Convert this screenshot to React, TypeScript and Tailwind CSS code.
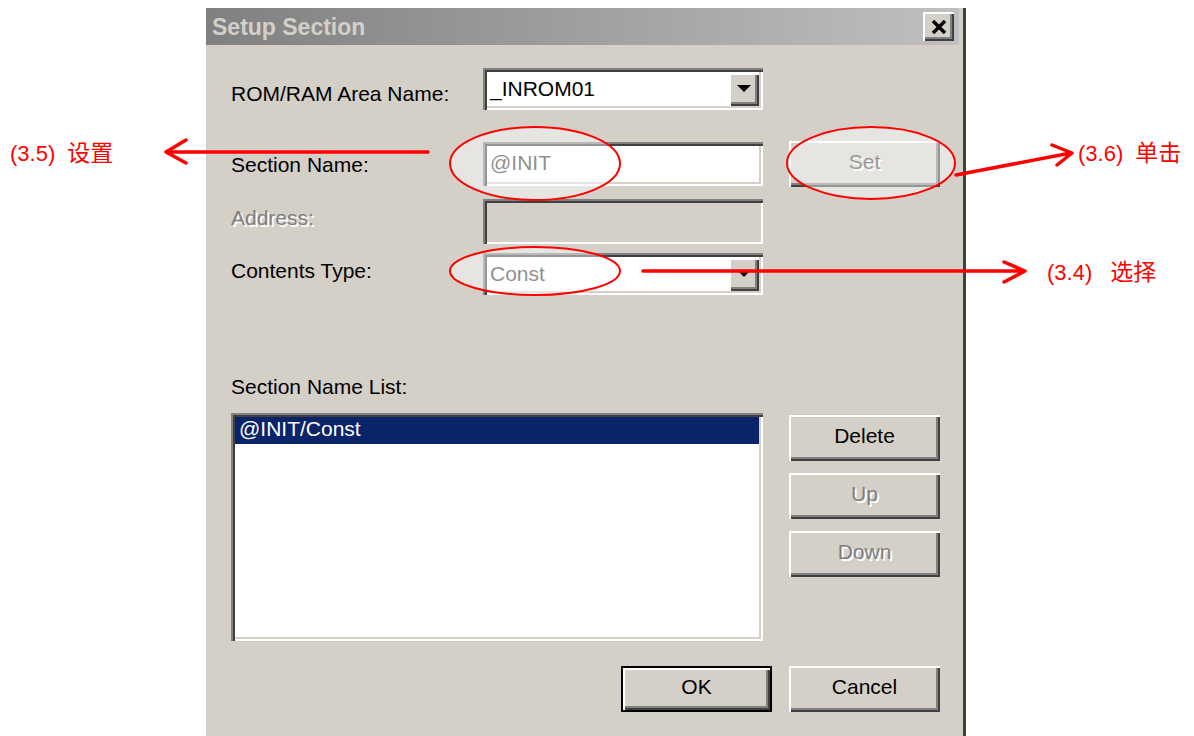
import React from 'react';

// Win2000-style bevels, drawn at double pixel size
const raised = 'shadow-[inset_2px_2px_0_#ffffff,inset_-2px_-2px_0_#404040,inset_-4px_-4px_0_#808080]';
const sunken = 'shadow-[inset_2px_2px_0_#808080,inset_4px_4px_0_#404040,inset_-2px_-2px_0_#ffffff,inset_-4px_-4px_0_#d4d0c8]';
const etched = 'text-[#808080] [text-shadow:2px_2px_0_#ffffff]';

function DropArrow() {
  return (
    <svg width="14" height="8" viewBox="0 0 14 8">
      <polygon points="0,0 14,0 7,7" fill="#000" />
    </svg>
  );
}

function Combo({ value, disabled }: { value: string; disabled?: boolean }) {
  return (
    <div className={`w-[280px] h-[42px] bg-white flex items-center p-[4px] ${sunken}`}>
      <span className={`flex-1 pl-[3px] ${disabled ? 'text-[#333333]' : 'text-black'}`}>{value}</span>
      <div className={`w-[30px] h-[33px] bg-[#d4d0c8] flex items-center justify-center ${raised}`}>
        <DropArrow />
      </div>
    </div>
  );
}

function Button({
  label,
  disabled,
  isDefault,
  textClass,
}: {
  label: string;
  disabled?: boolean;
  isDefault?: boolean;
  textClass?: string;
}) {
  return (
    <div
      className={`w-[151px] h-[46px] pb-[4px] bg-[#d4d0c8] flex items-center justify-center ${raised} ${
        isDefault ? 'border-2 border-black' : ''
      } ${textClass ?? (disabled ? etched : 'text-black')}`}
    >
      {label}
    </div>
  );
}

function Dialog() {
  return (
    <div className="ml-[206px] pt-[8px] w-[760px] h-[736px]">
      <div className="h-full bg-[#d4d0c8] border-r-[3px] border-[#404040] flex flex-col text-[21px] leading-[24px]">
        {/* caption bar */}
        <div className="mr-[4px] h-[37px] flex items-center justify-between pl-[6px] pr-[5px] bg-gradient-to-r from-[#808080] to-[#c0c0c0]">
          <span className="font-bold text-[23px] text-[#d4d0c8]">Setup Section</span>
          <div className={`w-[31px] h-[29px] bg-[#d4d0c8] flex items-center justify-center ${raised}`}>
            <svg width="16" height="14" viewBox="0 0 16 14">
              <path d="M2 1 L14 13 M14 1 L2 13" stroke="#000" strokeWidth="3.5" />
            </svg>
          </div>
        </div>

        <div className="pl-[25px] flex flex-col">
          <div className="mt-[23px] flex items-center">
            <span className="w-[252px] pt-[9px]">ROM/RAM Area Name:</span>
            <Combo value="_INROM01" />
          </div>

          <div className="mt-[31px] flex items-center">
            <span className="w-[252px] pt-[2px]">Section Name:</span>
            <div className={`w-[280px] h-[44px] bg-white flex items-center pl-[7px] pb-[3px] text-[#333333] ${sunken}`}>
              @INIT
            </div>
            <div className="ml-[26px]">
              <Button label="Set" textClass="text-[#444444] [text-shadow:2px_2px_0_#ffffff]" />
            </div>
          </div>

          <div className="mt-[12px] flex items-center">
            <span className={`w-[252px] pb-[7px] ${etched}`}>Address:</span>
            <div className={`w-[280px] h-[45px] bg-[#d4d0c8] ${sunken}`} />
          </div>

          <div className="mt-[9px] flex items-center">
            <span className="w-[252px] pb-[7px]">Contents Type:</span>
            <Combo value="Const" disabled />
          </div>

          <div className="mt-[80px]">Section Name List:</div>

          <div className="mt-[14px] flex">
            <div className={`w-[532px] h-[228px] bg-white p-[4px] ${sunken}`}>
              <div className="h-[27px] bg-[#0a246a] text-white pl-[4px] pb-[3px] flex items-center">@INIT/Const</div>
            </div>
            <div className="ml-[26px] pt-[2px] flex flex-col gap-[12px]">
              <Button label="Delete" />
              <Button label="Up" disabled />
              <Button label="Down" disabled />
            </div>
          </div>

          <div className="mt-[25px] pl-[390px] flex gap-[18px]">
            <div className="w-[150px]">
              <Button label="OK" isDefault />
            </div>
            <Button label="Cancel" />
          </div>
        </div>
      </div>
    </div>
  );
}

export default function App() {
  return (
    <div className="relative w-[1194px] h-[736px] bg-white overflow-hidden font-['Liberation_Sans',Arial,sans-serif]">
      <Dialog />

      {/* callouts over the dialog */}
      <svg className="absolute inset-0 pointer-events-none" width="1194" height="736" viewBox="0 0 1194 736">
        <g fill="#ffffff" fillOpacity="0.45" stroke="#ff0000" strokeWidth="2">
          <ellipse cx="535" cy="163.5" rx="85" ry="36.5" />
          <ellipse cx="871" cy="163" rx="84" ry="36" />
          <ellipse cx="535" cy="271" rx="85" ry="24" />
        </g>
        <g fill="none" stroke="#ff0000" strokeWidth="3.5" strokeLinecap="round" strokeLinejoin="round">
          <path d="M428 152 L167 152 M186 140 L166 152 L186 163" />
          <path d="M956 175 L1071 153 M1052 145 L1072 153 L1057 165" />
          <path d="M643 271 L1024 271 M1004 262 L1025 271 L1004 282" />
        </g>
      </svg>

      <div className="absolute left-[10px] top-[140px] text-[22px] leading-[26px] text-[#ff0000] font-['Liberation_Sans','Noto_Sans_CJK_SC',sans-serif] whitespace-pre">
        (3.5)<span className="ml-[12px] text-[23px]">设置</span>
      </div>
      <div className="absolute left-[1078px] top-[140px] text-[22px] leading-[26px] text-[#ff0000] font-['Liberation_Sans','Noto_Sans_CJK_SC',sans-serif] whitespace-pre">
        (3.6)<span className="ml-[12px] text-[23px]">单击</span>
      </div>
      <div className="absolute left-[1047px] top-[259px] text-[22px] leading-[26px] text-[#ff0000] font-['Liberation_Sans','Noto_Sans_CJK_SC',sans-serif] whitespace-pre">
        (3.4)<span className="ml-[18px] text-[23px]">选择</span>
      </div>
    </div>
  );
}
